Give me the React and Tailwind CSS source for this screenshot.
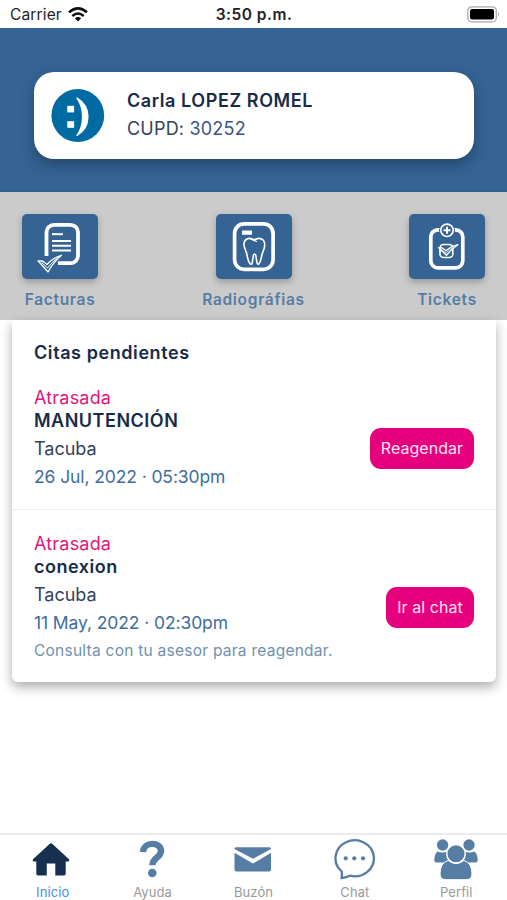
import React from 'react';

const SmileLogo = () => (
    <svg className="w-[54px] h-[54px]" viewBox="0 0 54 54">
        <circle cx="26.8" cy="26.5" r="26.4" fill="#006ba2" />
        <rect x="16.3" y="16.8" width="6.8" height="6.6" fill="#fff" />
        <rect x="16.3" y="32.2" width="6.8" height="6.6" fill="#fff" />
        <path d="M26 9 C40.5 17.500 40.5 38 26 46.500 C33.500 36 33.500 19.500 26 9 Z" fill="#fff" stroke="#fff" strokeWidth="1.4" strokeLinejoin="round" />
    </svg>
);

const InvoiceIcon = () => (
    <svg className="w-[76px] h-[65px]" viewBox="0 0 76 65" fill="none" stroke="#fff">
        <path d="M24.500 42 V18 A7.500 7.500 0 0 1 32 10.800 H48.500 A7.500 7.500 0 0 1 56 18 V42 A7.500 7.500 0 0 1 48.500 49.200 H36" strokeWidth="3.800" />
        <path d="M30 20.200 H41" strokeWidth="2" />
        <path d="M30 27 H49 M30 31.800 H49 M30 36.500 H49" strokeWidth="2" />
        <path d="M16 46.800 L20.500 47 L25 50.500 Q31 43.500 39.500 41.300 Q31.500 48 26 58 Z" fill="#346394" strokeWidth="1.3" strokeLinejoin="round" />
        <path d="M19.500 48.500 L25.500 54 Q31 46.500 37 43" strokeWidth="1" />
    </svg>
);

const ToothIcon = () => (
    <svg className="w-[76px] h-[65px]" viewBox="0 0 76 65" fill="none" stroke="#fff">
        <rect x="18.600" y="9.800" width="38.500" height="45.500" rx="9.500" strokeWidth="3.700" />
        <rect x="26" y="16.600" width="10" height="4.200" rx=".5" fill="#fff" stroke="none" />
        <path d="M38 26 C33 22.500 27.500 25 28 31 C28.200 34.500 30 36.500 30.800 40 C31.500 43.500 31.800 47 34 49.700 C35 50.700 36 50.200 36.200 48.800 L37.300 42 C37.700 39.500 39.500 39.500 39.900 42 L41 48.800 C41.300 50.300 42.300 50.700 43.200 49.500 C45.200 47 45.200 43 46.300 39.500 C47.300 36.500 48.700 34.500 48.700 31 C49 25 43.500 22.500 38 26 Z" strokeWidth="1.600" strokeLinejoin="round" />
        <path d="M34.500 24.600 Q38 26.300 40.500 27.500" strokeWidth="1.200" strokeLinecap="round" />
    </svg>
);

const TicketIcon = () => (
    <svg className="w-[76px] h-[65px]" viewBox="0 0 76 65" fill="none" stroke="#fff">
        <rect x="21.800" y="15.800" width="32" height="38" rx="7" strokeWidth="3.700" />
        <circle cx="38" cy="16.300" r="8" fill="#346394" stroke="none" />
        <circle cx="38" cy="16.300" r="6.200" strokeWidth="1.600" />
        <path d="M38 12.800 V19.800 M34.500 16.300 H41.500" strokeWidth="2" />
        <rect x="31" y="30.500" width="12.800" height="13" rx="3.500" strokeWidth="1.700" />
        <path d="M29.500 33.700 L33.300 34 L37 36.800 Q41.500 32.500 49 30.700 Q42 35 37.500 41.300 Z" fill="#346394" strokeWidth="1.300" strokeLinejoin="round" />
        <path d="M32 35.500 L37 39.200 Q40 35.500 44.500 33" strokeWidth=".8" />
    </svg>
);

const HomeIcon = () => (
    <svg className="w-[44px] h-[44px]" viewBox="0 0 44 44" fill="#17304f">
        <path d="M20.800 6.800 Q22 5.800 23.200 6.800 L40 22.300 Q41 24.300 39 24.500 H36.700 V36.800 Q36.700 38.500 35 38.500 H26.300 V26.500 H17.800 V38.500 H9 Q7.300 38.500 7.300 36.800 V24.500 H5 Q3 24.300 4 22.300 Z" />
    </svg>
);

const HelpIcon = () => (
    <svg className="w-[44px] h-[44px]" viewBox="0 0 44 44">
        <path d="M13 15 C13.500 4.300 31 4.500 31 14 C31 21 22.500 20.300 22.400 28.300" fill="none" stroke="#567da3" strokeWidth="6.400" />
        <circle cx="22.300" cy="36" r="4.300" fill="#567da3" />
    </svg>
);

const MailIcon = () => (
    <svg className="w-[44px] h-[44px]" viewBox="0 0 44 44" fill="#567da3">
        <path d="M5 10.300 H38.500 Q40 10.300 40 12 L22 21.800 L3.500 12 Q3.500 10.300 5 10.300 Z" />
        <path d="M3.500 15.700 L22 26.500 L40 15.700 V32.500 Q40 34.500 38 34.500 H5.500 Q3.500 34.500 3.500 32.500 Z" />
    </svg>
);

const ChatIcon = () => (
    <svg className="w-[44px] h-[44px]" viewBox="0 0 44 44">
        <path d="M8.700 34.500 A19.200 18 0 1 1 17 38.700 Q13.500 40.300 8.500 41.200 Q9.300 38 8.700 34.500 Z" fill="none" stroke="#567da3" strokeWidth="2.300" strokeLinejoin="round" />
        <circle cx="12.700" cy="21.300" r="2.100" fill="#567da3" />
        <circle cx="21.300" cy="21.300" r="2.100" fill="#567da3" />
        <circle cx="30" cy="21.300" r="2.100" fill="#567da3" />
    </svg>
);

const PeopleIcon = () => (
    <svg className="w-[44px] h-[44px]" viewBox="0 0 44 44" fill="#567da3">
        <circle cx="8.600" cy="8" r="5.700" />
        <circle cx="35" cy="8" r="5.700" />
        <path d="M3.500 14.500 Q8.500 16.500 13 14.500 L16 25.500 H2.500 Q0 25.500 .3 22.500 Q.6 17 3.500 14.500 Z" />
        <path d="M40.500 14.500 Q35.500 16.500 31 14.500 L28 25.500 H41.500 Q44 25.500 43.700 22.500 Q43.400 17 40.500 14.500 Z" />
        <path d="M14 23.500 Q22 29.500 30 23.500 Q38 26 38 37 Q38 42.700 32 42.700 H12 Q6 42.700 6 37 Q6 26 14 23.500 Z" stroke="#fff" strokeWidth="1" />
        <circle cx="22" cy="16.700" r="9.300" stroke="#fff" strokeWidth="1.500" />
    </svg>
);

const shortcuts = [
    { label: 'Facturas', Icon: InvoiceIcon },
    { label: 'Radiográfias', Icon: ToothIcon },
    { label: 'Tickets', Icon: TicketIcon },
];

const appointments = [
    {
        status: 'Atrasada',
        title: 'MANUTENCIÓN',
        place: 'Tacuba',
        date: '26 Jul, 2022 · 05:30pm',
        action: 'Reagendar',
        size: 'h-[124px]',
        button: 'w-[104px] mt-[2px]',
    },
    {
        status: 'Atrasada',
        title: 'conexion',
        place: 'Tacuba',
        date: '11 May, 2022 · 02:30pm',
        note: 'Consulta con tu asesor para reagendar.',
        action: 'Ir al chat',
        size: 'h-[173px] border-t border-[#efefef] pt-[21px]',
        button: 'w-[88px] mt-[1px]',
    },
];

const tabs = [
    { label: 'Inicio', Icon: HomeIcon, color: 'text-[#3f8ef5] pl-1' },
    { label: 'Ayuda', Icon: HelpIcon, color: 'text-[#999] pl-px' },
    { label: 'Buzón', Icon: MailIcon, color: 'text-[#999]' },
    { label: 'Chat', Icon: ChatIcon, color: 'text-[#999]' },
    { label: 'Perfil', Icon: PeopleIcon, color: 'text-[#999]' },
];

const StatusBar = () => (
    <div className="h-[28px] shrink-0 grid grid-cols-3 items-center pl-[10px] pr-[7px] pt-[1px] bg-white text-[#222]">
        <div className="flex items-center gap-[6px]">
            <span className="text-[15.500px] tracking-[0.15px] pt-px">Carrier</span>
            <svg className="w-5 h-[15px]" viewBox="0 0 20 15" fill="none" stroke="#111" strokeWidth="2.500">
                <path d="M1 5.300 Q10 -2.500 19 5.300 M4.300 9 Q10 4 15.700 9" />
                <path d="M10 14.500 L6.800 11.300 Q10 8.800 13.200 11.300 Z" fill="#111" stroke="none" />
            </svg>
        </div>
        <div className="text-center pr-[2px] pt-px text-[15.500px] font-semibold tracking-[0.5px] whitespace-nowrap">3:50 p.m.</div>
        <svg className="justify-self-end w-[33px] h-[17px]" viewBox="0 0 33 17">
            <rect x=".8" y=".8" width="28.500" height="15" rx="4" fill="#fff" stroke="#aaa" strokeWidth="1.300" />
            <rect x="3" y="3" width="24" height="10.500" rx="2" fill="#000" />
            <path d="M31 6 Q33 8.300 31 10.500 Z" fill="#aaa" />
        </svg>
    </div>
);

const Appointment = ({ item }) => (
    <div className={`flex items-center justify-between px-[22px] ${item.size}`}>
        <div className="self-start">
            <div className="text-[18px] leading-[25px] tracking-[0.2px] text-[#df167c]">{item.status}</div>
            <div className="text-[18px] leading-[21px] tracking-[0.5px] font-semibold text-[#172b49]">{item.title}</div>
            <div className="text-[18px] leading-[28px] mt-[4px] text-[#34435c]">{item.place}</div>
            <div className="text-[17.500px] leading-[27px] tracking-[-0.1px] text-[#3e6d9e]">{item.date}</div>
            {item.note && (
                <div className="text-[15.500px] leading-[30px] tracking-[0.25px] text-[#7190ae] whitespace-nowrap">{item.note}</div>
            )}
        </div>
        <button className={`h-[41px] shrink-0 rounded-[11px] bg-[#e5007d] text-[16px] text-[#ffe3f2] tracking-[0.05px] ${item.button}`}>
            {item.action}
        </button>
    </div>
);

const App = () => {
    return (
        <div className="w-full h-[900px] flex flex-col overflow-hidden bg-white font-['Inter','Liberation_Sans',sans-serif]">
            <StatusBar />

            {/* Profile */}
            <header className="h-[164px] shrink-0 bg-[#346394] px-[34px] pt-[44px] border-b border-[#2b5f95]">
                <div className="h-[87px] w-[440px] flex items-center pl-[17px] gap-[22px] rounded-[20px] bg-white shadow-[0_6px_14px_rgba(0,0,0,0.28)]">
                    <SmileLogo />
                    <div className="text-[18px] leading-[28px] text-[#172b49] pb-[2px]">
                        <div className="font-semibold tracking-[0.58px]">Carla LOPEZ ROMEL</div>
                        <div className="tracking-[0.2px] text-[#32415e]">CUPD: <span className="text-[#3c5580]">30252</span></div>
                    </div>
                </div>
            </header>

            {/* Shortcuts */}
            <nav className="h-[128px] shrink-0 flex justify-between px-[5px] pt-[22px] bg-[#cbcbcb]">
                {shortcuts.map(({ label, Icon }) => (
                    <div key={label} className="w-[110px] flex flex-col items-center">
                        <div className="rounded-[5px] bg-[#346394] shadow-[0_3px_7px_rgba(0,0,0,0.25)]">
                            <Icon />
                        </div>
                        <div className="mt-[9px] text-[15.500px] leading-[24px] font-semibold tracking-[0.7px] text-[#567da5] whitespace-nowrap">{label}</div>
                    </div>
                ))}
            </nav>

            {/* Pending appointments */}
            <main className="flex-1">
                <section className="mr-[11px] ml-[12px] h-[362px] rounded-b-[6px] bg-white shadow-[0_5px_12px_rgba(0,0,0,0.33)]">
                    <h2 className="h-[65px] px-[22px] pt-[19px] text-[18px] leading-[28px] tracking-[0.58px] font-semibold text-[#172b49]">Citas pendientes</h2>
                    {appointments.map((item) => (
                        <Appointment key={item.title} item={item} />
                    ))}
                </section>
            </main>

            {/* Bottom tabs */}
            <footer className="h-[67px] shrink-0 grid grid-cols-5 border-t-2 border-[#ececec] bg-white">
                {tabs.map(({ label, Icon, color }) => (
                    <div key={label} className="flex flex-col items-center pt-[2px]">
                        <Icon />
                        <div className={`text-[13px] leading-[18px] mt-[2px] tracking-[0.1px] ${color}`}>{label}</div>
                    </div>
                ))}
            </footer>
        </div>
    );
};

export default App;
